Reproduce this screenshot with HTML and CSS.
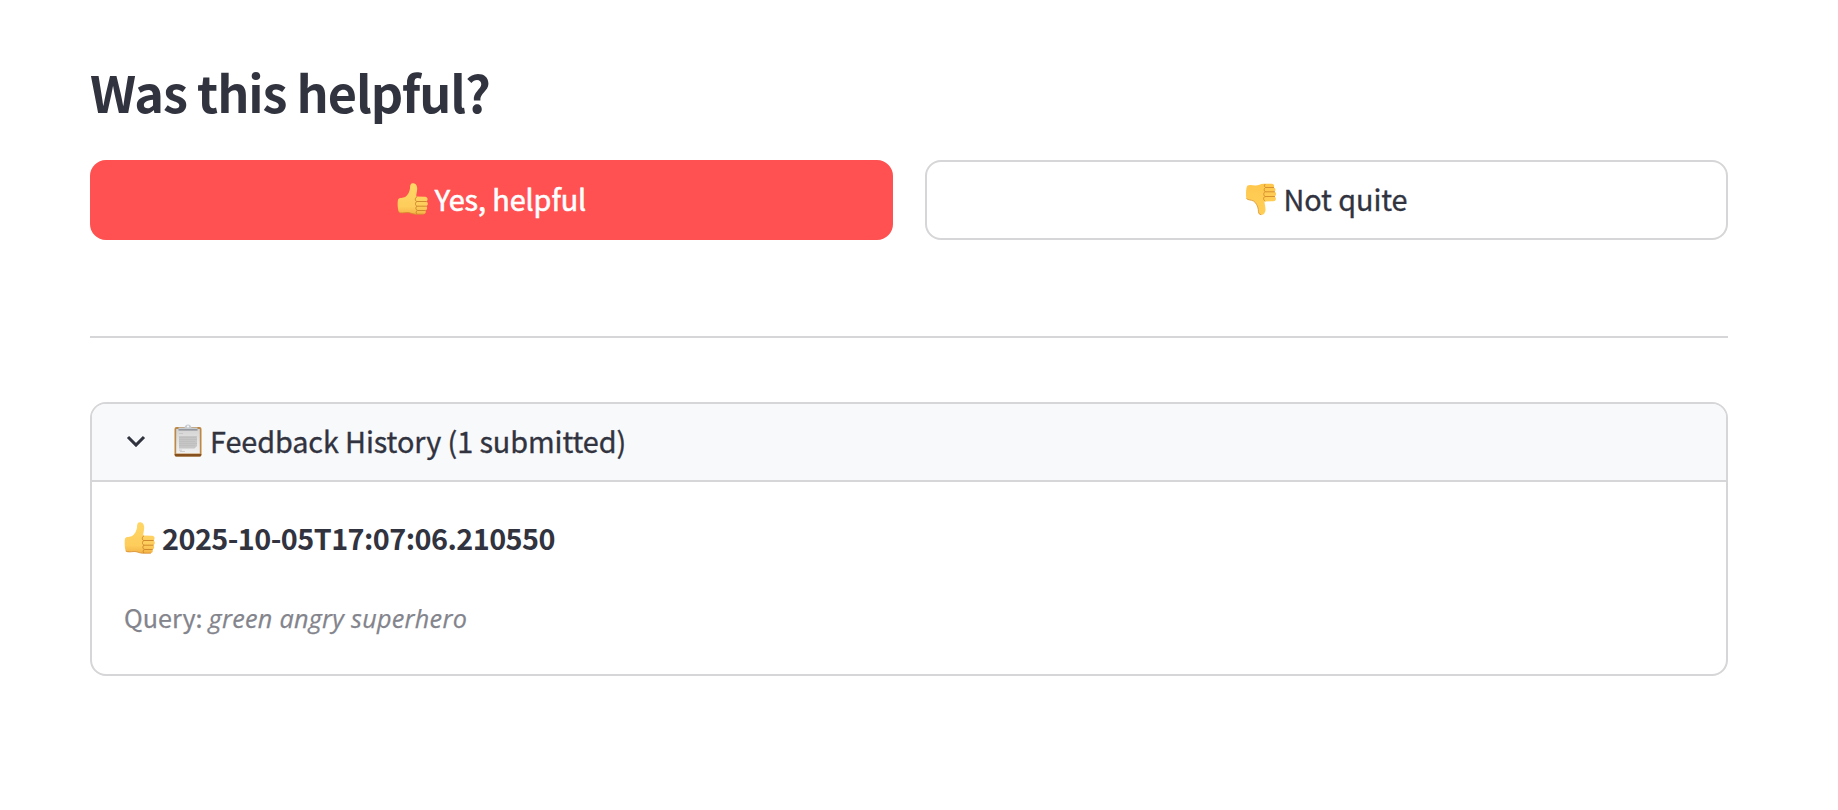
FILE: index.html
```html
<!DOCTYPE html>
<html lang="en">
<head>
<meta charset="utf-8">
<title>Feedback</title>
<link rel="stylesheet" href="styles.css">
</head>
<body>
<svg class="defs" width="0" height="0" aria-hidden="true">
  <defs>
    <linearGradient id="skin" x1="0" y1="0" x2="0" y2="1">
      <stop offset="0" stop-color="#ffd766"/>
      <stop offset="0.75" stop-color="#fecd5c"/>
      <stop offset="1" stop-color="#f3b345"/>
    </linearGradient>
    <linearGradient id="skin-down" x1="0" y1="0" x2="0" y2="1">
      <stop offset="0" stop-color="#ffce55"/>
      <stop offset="0.7" stop-color="#ffcb53"/>
      <stop offset="1" stop-color="#ffc64a"/>
    </linearGradient>
    <linearGradient id="paper" x1="0" y1="0" x2="0" y2="1">
      <stop offset="0" stop-color="#d4d4d4"/>
      <stop offset="1" stop-color="#f1f1f1"/>
    </linearGradient>
    <path id="hand" d="M1.2 17.2C2.4 15.6 6 16.2 8.2 15C11 13.2 12.600 9.500 13 6.500C13.200 4 13 1.500 15.600 1.200C18.500 1 20.200 3.300 20.200 6.500C20.200 9.500 19.300 11.800 19.200 14.600L28.200 14.800C31 15 31.300 18.600 29.300 19.600C31.500 20.500 31.200 23.700 29.200 24.300C30.800 25.300 30.300 28.200 28.400 28.600C29.500 30.500 28.400 32.200 26.500 32.300L18.500 32.200C14.800 32 12.800 30.300 10 30.500C7 30.800 4 31.700 2 30.200C0.500 27.500 0.300 19.500 1.200 17.200Z"/>
    <path id="fingers" d="M19.600 15C17.800 16 17.800 18.700 19.700 19.500H29.300M19.700 19.500C17.900 20.700 18 23.200 19.900 24.200H29.200M19.900 24.200C18.300 25.300 18.500 27.600 20.200 28.500H28.300M20.200 28.500C18.700 29.500 18.700 31 19.800 31.800"/>
    <symbol id="thumb" viewBox="0 0 32 34">
      <use href="#hand" fill="url(#skin)"/>
      <use href="#fingers" fill="none" stroke="#cf8a2e" stroke-width="1" stroke-linecap="round"/>
      <path fill="none" stroke="#d58c2e" stroke-width="0.8" stroke-linecap="round" d="M2 30.200C4 31.500 7 30.700 10 30.500C12.800 30.300 14.800 32 18.500 32.200H26.500"/>
    </symbol>
    <symbol id="thumb-down" viewBox="0 0 32 34">
      <g transform="matrix(1 0 0 -1 -0.700 34)">
        <use href="#hand" fill="url(#skin-down)"/>
        <use href="#fingers" fill="none" stroke="#d8912f" stroke-width="1" stroke-linecap="round"/>
        <path fill="none" stroke="#dd9a35" stroke-width="0.9" stroke-linecap="round" d="M1.400 17.200C2.400 15.800 6 16.200 8.200 15C11 13.200 12.600 9.500 13 6.500C13.200 4 13 1.500 15.600 1.300"/>
      </g>
    </symbol>
    <symbol id="clipboard" viewBox="0 0 28 34">
      <rect x="0.500" y="3" width="27" height="29.500" rx="2" fill="#bd8845"/>
      <path fill="#85501d" d="M0.700 30H27.300V31Q27.300 32.500 25.800 32.500H2.200Q0.700 32.500 0.700 31Z"/>
      <path fill="url(#paper)" d="M2.200 5H25.800V29.600H2.200Z"/>
      <path fill="#c6c6c6" d="M5 12H23V22L20.500 24.500H5Z"/>
      <path fill="none" stroke="#bababa" stroke-width="0.600" d="M5 9.500H9M5 13.500H22M5 15.500H23M5 17.500H21M5 19.500H23M5 21.500H21M5 26.200H8M6 27.500H11"/>
      <path fill="#c7ccd1" d="M4.500 3.600H10.500C11 1.500 12.300 0.500 14 0.500S17 1.500 17.500 3.600H23.500V6.200H4.500Z"/>
      <path fill="#85898e" d="M4.500 5.200H23.500V6.600H4.500Z"/>
      <circle cx="14" cy="2.500" r="0.900" fill="#fff"/>
    </symbol>
  </defs>
</svg>
<main class="page">
  <h2 class="title">Was this helpful?</h2>
  <div class="actions">
    <button class="btn btn-primary"><svg class="thumb"><use href="#thumb"/></svg><span class="text">Yes, helpful</span></button>
    <button class="btn"><svg class="thumb"><use href="#thumb-down"/></svg><span class="text">Not quite</span></button>
  </div>
  <hr class="divider">
  <section class="expander">
    <header class="summary">
      <svg class="chevron" viewBox="0 0 20 12"><path d="M2 2L10 10L18 2"/></svg>
      <svg class="clip"><use href="#clipboard"/></svg>
      <span class="text">Feedback History (1 submitted)</span>
    </header>
    <div class="content">
      <p class="entry"><svg class="thumb"><use href="#thumb"/></svg><strong class="stamp">2025-10-05T17:07:06.210550</strong></p>
      <p class="query"><span>Query:</span><em class="term">green angry superhero</em></p>
    </div>
  </section>
</main>
</body>
</html>
```
FILE: styles.css
```css
* { box-sizing: border-box; }
body {
  margin: 0;
  background: #fff;
  color: #31333f;
  font-family: "Noto Sans CJK SC", "Open Sans", sans-serif;
  font-size: 28.8px;
  line-height: 48px;
}
.defs { display: block; }
.page { width: 1838px; height: 810px; padding: 58px 110px 0 90px; }
.title { margin: 0; height: 102px; font-size: 50.4px; font-weight: 700; line-height: 67px; letter-spacing: -1.12px; white-space: nowrap; }
.actions { display: grid; grid-template-columns: 1fr 1fr; gap: 32px; }
.btn {
  display: flex;
  align-items: center;
  justify-content: center;
  gap: 6px;
  height: 80px;
  padding: 0 0 3px;
  border: 2px solid #d6d6d8;
  border-radius: 16px;
  background: #fff;
  color: inherit;
  font: inherit;
}
.btn-primary { background: #ff5151; border-color: #ff5151; color: #fff; }
.text { letter-spacing: -0.08px; -webkit-text-stroke: 0.35px currentColor; }
.btn-primary .text { -webkit-text-stroke-width: 0.6px; }
.thumb { flex: none; width: 32px; height: 34px; }
.divider { height: 2px; margin: 96px 0 64px; border: 0; background: #d6d6d8; }
.expander { height: 274px; border: 2px solid #d6d6d8; border-radius: 16px; overflow: hidden; }
.summary {
  display: flex;
  align-items: center;
  height: 78px;
  padding: 0 0 3px 34px;
  border-bottom: 2px solid #d6d6d8;
  background: #f8f9fb;
}
.chevron { width: 20px; height: 12px; margin-right: 28px; fill: none; stroke: #31333f; stroke-width: 3.1; }
.clip { width: 28px; height: 34px; margin: 1px 8px 0 0; }
.content { padding: 32px; }
.entry { display: flex; align-items: center; gap: 6px; margin: 0 0 33px; }
.stamp { font-weight: 700; letter-spacing: -0.55px; }
.query { display: flex; align-items: baseline; gap: 6px; margin: 0; color: #83848c; font-size: 25.2px; line-height: 44px; -webkit-text-stroke: 0.25px currentColor; }
.term { font-family: "Open Sans", sans-serif; font-size: 25.2px; font-style: italic; letter-spacing: 0.28px; white-space: nowrap; }
```
